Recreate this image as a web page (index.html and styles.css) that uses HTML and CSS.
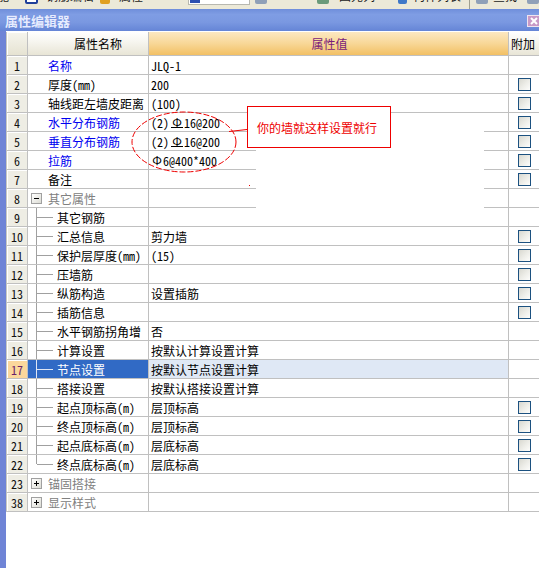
FILE: index.html
```html
<!DOCTYPE html>
<html>
<head>
<meta charset="utf-8">
<title>属性编辑器</title>
<link rel="stylesheet" href="styles.css">
</head>
<body>
<div class="toolbar">
  <span class="tb-txt w10">能</span>
  <span class="tb-ico blue m16"></span>
  <span class="tb-txt m8">钢筋编辑</span>
  <span class="tb-ico yellow m6"></span>
  <span class="tb-txt m9">属性</span>
  <span class="tb-field m45"><span class="tb-sel"></span></span>
  <span class="tb-ico grey m5"></span>
  <span class="tb-ico green m50"></span>
  <span class="tb-txt m10">图元列</span>
  <span class="tb-ico blue2 m23"></span>
  <span class="tb-txt m6">构件列表</span>
  <span class="tb-sep m8"></span>
  <span class="tb-ico grey m6"></span>
  <span class="tb-txt m5">查找</span>
  <span class="tb-ico grey m10"></span>
</div>
<div class="window">
  <div class="titlebar">
    <span class="title">属性编辑器</span>
    <span class="close"><svg width="8" height="8" viewBox="0 0 8 8"><path d="M1 1L7 7M7 1L1 7" stroke="#fff" stroke-width="2"/></svg></span>
  </div>
  <div class="pane">
    <div class="grid">
      <div class="c n hd"></div>
      <div class="c k hd hk">属性名称</div>
      <div class="c v hd hv">属性值</div>
      <div class="c x hd hx">附加</div>

      <div class="c n">1</div><div class="c k blue">名称</div><div class="c v">JLQ-1</div><div class="c x"></div>
      <div class="c n">2</div><div class="c k">厚度(mm)</div><div class="c v">200</div><div class="c x"><span class="cb"></span></div>
      <div class="c n">3</div><div class="c k">轴线距左墙皮距离</div><div class="c v">(100)</div><div class="c x"><span class="cb"></span></div>
      <div class="c n">4</div><div class="c k blue">水平分布钢筋</div><div class="c v">(2)<span class="rb bar">Φ</span>16@200</div><div class="c x"><span class="cb"></span></div>
      <div class="c n">5</div><div class="c k blue">垂直分布钢筋</div><div class="c v">(2)<span class="rb bar">Φ</span>16@200</div><div class="c x"><span class="cb"></span></div>
      <div class="c n">6</div><div class="c k blue">拉筋</div><div class="c v"><span class="rb">Φ</span>6@400*400</div><div class="c x"><span class="cb"></span></div>
      <div class="c n">7</div><div class="c k">备注</div><div class="c v"></div><div class="c x"><span class="cb"></span></div>
      <div class="c n">8</div><div class="c k grp"><span class="exp minus"></span>其它属性</div><div class="c v"></div><div class="c x"></div>
      <div class="c n">9</div><div class="c k ch">其它钢筋</div><div class="c v"></div><div class="c x"></div>
      <div class="c n">10</div><div class="c k ch">汇总信息</div><div class="c v">剪力墙</div><div class="c x"><span class="cb"></span></div>
      <div class="c n">11</div><div class="c k ch">保护层厚度(mm)</div><div class="c v">(15)</div><div class="c x"><span class="cb"></span></div>
      <div class="c n">12</div><div class="c k ch">压墙筋</div><div class="c v"></div><div class="c x"><span class="cb"></span></div>
      <div class="c n">13</div><div class="c k ch">纵筋构造</div><div class="c v">设置插筋</div><div class="c x"><span class="cb"></span></div>
      <div class="c n">14</div><div class="c k ch">插筋信息</div><div class="c v"></div><div class="c x"><span class="cb"></span></div>
      <div class="c n">15</div><div class="c k ch">水平钢筋拐角增</div><div class="c v">否</div><div class="c x"></div>
      <div class="c n">16</div><div class="c k ch">计算设置</div><div class="c v">按默认计算设置计算</div><div class="c x"></div>
      <div class="c n sel-n">17</div><div class="c k ch sel-k">节点设置</div><div class="c v sel-v">按默认节点设置计算</div><div class="c x"></div>
      <div class="c n">18</div><div class="c k ch">搭接设置</div><div class="c v">按默认搭接设置计算</div><div class="c x"></div>
      <div class="c n">19</div><div class="c k ch">起点顶标高(m)</div><div class="c v">层顶标高</div><div class="c x"><span class="cb"></span></div>
      <div class="c n">20</div><div class="c k ch">终点顶标高(m)</div><div class="c v">层顶标高</div><div class="c x"><span class="cb"></span></div>
      <div class="c n">21</div><div class="c k ch">起点底标高(m)</div><div class="c v">层底标高</div><div class="c x"><span class="cb"></span></div>
      <div class="c n">22</div><div class="c k ch last">终点底标高(m)</div><div class="c v">层底标高</div><div class="c x"><span class="cb"></span></div>
      <div class="c n">23</div><div class="c k grp"><span class="exp plus"></span>锚固搭接</div><div class="c v"></div><div class="c x"></div>
      <div class="c n">38</div><div class="c k grp"><span class="exp plus"></span>显示样式</div><div class="c v"></div><div class="c x"></div>
    </div>
  </div>
</div>

<svg class="annot" width="539" height="568" viewBox="0 0 539 568">
  <rect x="256" y="113" width="228" height="96" fill="#fff"/>
  <ellipse cx="184" cy="142" rx="52" ry="30" fill="none" stroke="#e00" stroke-width="1" stroke-dasharray="6 2"/>
  <line x1="229" y1="131.5" x2="247" y2="129.5" stroke="#e00" stroke-width="1"/>
  <rect x="249" y="185" width="1" height="1" fill="#e00"/>
</svg>
<div class="callout">你的墙就这样设置就行</div>
</body>
</html>
```

FILE: styles.css
```css
html, body {
  margin: 0;
  padding: 0;
}
body {
  width: 539px;
  height: 568px;
  overflow: hidden;
  position: relative;
  background: #fff;
  font-family: "Noto Sans Mono CJK SC", "Noto Sans CJK SC", sans-serif;
  font-size: 12px;
  color: #000;
  display: flex;
  flex-direction: column;
}

/* top toolbar fragment */
.toolbar {
  height: 9px;
  flex: none;
  background: #ece9d8;
  overflow: hidden;
  display: flex;
  align-items: flex-end;
}
.tb-txt {
  flex: none;
  line-height: 14px;
  padding-bottom: 6px;
  color: #1a1a1a;
}
.tb-ico {
  flex: none;
  width: 12px;
  height: 10px;
  margin-bottom: 5px;
  border-radius: 2px;
}
.tb-ico.blue { background: #fff; border: 2px solid #1f3f9a; width: 9px; height: 8px; }
.tb-ico.blue2 { background: #3f78c8; width: 9px; }
.tb-ico.yellow { background: #e0a020; width: 10px; }
.tb-ico.grey { background: #8fa0b8; }
.tb-ico.green { background: #6a9a7a; }
.tb-field {
  flex: none;
  width: 60px;
  height: 12px;
  margin-bottom: 4px;
  background: #fff;
  border: 1px solid #b8b8b0;
  display: flex;
  align-items: flex-end;
}
.tb-sel { width: 10px; height: 4px; background: #2c4fb0; margin-left: 1px; margin-bottom: 1px; }
.tb-sep { flex: none; width: 1px; height: 9px; background: #a0a090; }
.w10 { margin-left: -3px; }
.m5 { margin-left: 5px; }
.m6 { margin-left: 6px; }
.m8 { margin-left: 8px; }
.m9 { margin-left: 9px; }
.m10 { margin-left: 10px; }
.m16 { margin-left: 16px; }
.m23 { margin-left: 23px; }
.m45 { margin-left: 45px; }
.m50 { margin-left: 50px; }

/* window */
.window {
  flex: 1;
  display: flex;
  flex-direction: column;
}
.titlebar {
  height: 22px;
  flex: none;
  display: flex;
  align-items: center;
  justify-content: space-between;
  padding-left: 5px;
  background: linear-gradient(to bottom, #6f8edb 0%, #7f9de4 25%, #7a98e1 60%, #6585d6 100%);
}
.title {
  color: #e6ecff;
  font-family: "Noto Sans CJK SC", sans-serif;
  font-weight: bold;
  font-size: 13px;
  text-shadow: 0 0 1px #5c7bd0;
}
.close {
  width: 12px;
  height: 12px;
  margin-top: 2px;
  box-sizing: border-box;
  background: #c899c6;
  border: 1px solid #efe3ef;
  border-right: none;
  display: flex;
  align-items: center;
  justify-content: center;
}
.pane {
  flex: 1;
  border-left: 6px solid #6f84d6;
  padding-top: 1px;
  background: #fff;
}

/* grid */
.grid {
  display: grid;
  grid-template-columns: 22px 121px 360px 1fr;
  grid-template-rows: 24px;
  grid-auto-rows: 19px;
}
.c {
  box-sizing: border-box;
  border-right: 1px solid #c0c0c0;
  border-bottom: 1px solid #c0c0c0;
  display: flex;
  align-items: center;
  white-space: nowrap;
  overflow: hidden;
  min-width: 0;
}
.n {
  border-left: 1px solid #c8c8c0;
  justify-content: center;
  background: #eeede4;
  box-shadow: inset 1px 1px 0 #fff;
  color: #111;
}
.n.hd { background: linear-gradient(to bottom, #f6f5ee, #e6e3d2); }
.hk {
  justify-content: center;
  background: linear-gradient(to bottom, #ffffff 0%, #f7f6f0 40%, #e8e5d6 100%);
}
.hv {
  justify-content: center;
  color: #7a1a7a;
  background: linear-gradient(to bottom, #fce8c2 0%, #f8d797 50%, #f2c064 100%);
}
.k {
  padding-left: 20px;
}
.k.blue { color: #0000f0; }
.v { padding-left: 2px; }
.x { border-right: none; padding-left: 9px; }
.x.hx {
  padding-left: 2px;
  background: linear-gradient(to bottom, #ffffff 0%, #f7f6f0 40%, #e8e5d6 100%);
}

.grp {
  padding-left: 3px;
  color: #808080;
}
.exp {
  flex: none;
  width: 11px;
  height: 11px;
  box-sizing: border-box;
  margin-right: 6px;
  border: 1px solid #a0a0a0;
  background-color: #f4f4f0;
}
.exp.minus {
  background-image: linear-gradient(#000, #000), linear-gradient(135deg, #ffffff, #dcdcd4);
  background-size: 5px 1px, 100% 100%;
  background-position: center, 0 0;
  background-repeat: no-repeat;
}
.exp.plus {
  background-image: linear-gradient(#000, #000), linear-gradient(#000, #000), linear-gradient(135deg, #ffffff, #dcdcd4);
  background-size: 5px 1px, 1px 5px, 100% 100%;
  background-position: center, center, 0 0;
  background-repeat: no-repeat;
}

.ch {
  padding-left: 29px;
  background-image: linear-gradient(#a0a0a0, #a0a0a0), linear-gradient(#a0a0a0, #a0a0a0);
  background-size: 1px 100%, 16px 1px;
  background-position: 8px 0, 9px 9px;
  background-repeat: no-repeat;
}
.ch.last {
  background-size: 1px 9px, 16px 1px;
}

.sel-n {
  background: #fbd79c;
  color: #6a1f6a;
}
.sel-k {
  color: #fff;
  background-color: #316ac5;
  background-image: linear-gradient(#dfe6f5, #dfe6f5), linear-gradient(#dfe6f5, #dfe6f5);
}
.sel-v {
  background: #dfe8f5;
}

.rb {
  display: inline-block;
  width: 12px;
  text-align: center;
  line-height: 12px;
}
.rb.bar {
  margin: 0 1px 0 2px;
  box-shadow: inset 0 -1px 0 #000;
}

.cb {
  width: 13px;
  height: 13px;
  box-sizing: border-box;
  border: 1px solid #1c5180;
  background: linear-gradient(135deg, #d8d8d0 0%, #eeeee9 55%, #fdfdfb 100%);
}

/* annotation overlay */
.annot {
  position: absolute;
  left: 0;
  top: 0;
  pointer-events: none;
}
.callout {
  position: absolute;
  left: 247px;
  top: 106px;
  width: 144px;
  height: 42px;
  box-sizing: border-box;
  border: 1px solid #e00;
  background: #fff;
  color: #e00;
  font-family: "Noto Sans CJK SC", sans-serif;
  font-size: 12px;
  padding-left: 9px;
  display: flex;
  align-items: center;
}
```
